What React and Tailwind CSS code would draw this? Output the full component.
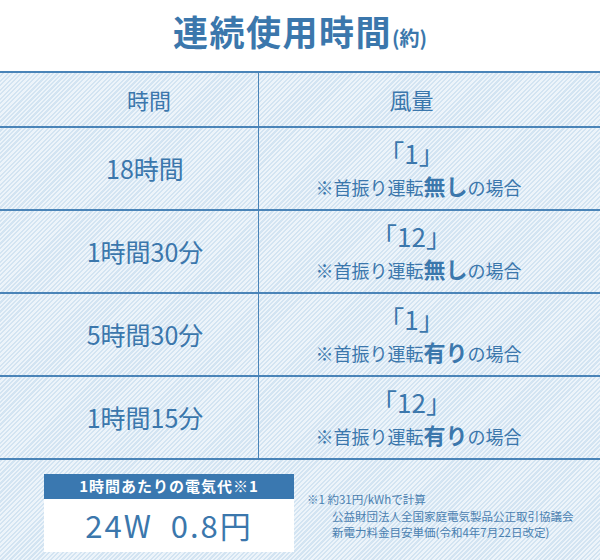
const rows = [
  { time: "18時間", speed: "1", swing: "無し" },
  { time: "1時間30分", speed: "12", swing: "無し" },
  { time: "5時間30分", speed: "1", swing: "有り" },
  { time: "1時間15分", speed: "12", swing: "有り" },
];

const font = "font-['Noto_Sans_CJK_JP','Noto_Sans',sans-serif]";

export default function App() {
  return (
    <div className={`flex h-[560px] w-[600px] flex-col bg-white text-[#3b77ac] ${font}`}>
      <div className="flex h-[71px] shrink-0 items-center justify-center pb-[10px]">
        <h1 className="text-[35px] font-bold leading-none tracking-[1.5px]">
          連続使用時間<span className="text-[20px] font-bold tracking-normal">(約)</span>
        </h1>
      </div>

      <div className="flex-1 bg-[repeating-linear-gradient(135deg,#d3e4f2_0px,#d3e4f2_1.6px,#edf4fa_1.6px,#edf4fa_3.2px)]">
        <div className="grid grid-cols-[259px_1fr] border-t-2 border-[#4a84b8]">
          <div className="flex h-[55px] items-center justify-center border-r border-b-2 border-[#4a84b8] pl-[40px] text-[22px]">
            時間
          </div>
          <div className="flex h-[55px] items-center justify-center border-b-2 border-[#4a84b8] pr-[36px] text-[22px]">
            風量
          </div>
          {rows.map((r, i) => (
            <div key={i} className="contents">
              <div className="flex h-[83px] items-center justify-center border-r border-b-2 border-[#4a84b8] pl-[32px] text-[25px]">
                {r.time}
              </div>
              <div className="flex h-[83px] flex-col items-center justify-center gap-[8px] border-b-2 border-[#4a84b8] pr-[22px]">
                <div className="pr-[14px] text-[26px] leading-[26px]">「{r.speed}」</div>
                <div className="text-[18px] leading-[22px]">
                  ※首振り運転<span className="text-[22px] font-bold">{r.swing}</span>の場合
                </div>
              </div>
            </div>
          ))}
        </div>

        <div className="flex">
          <div className="ml-[44px] mt-[14px] w-[250px]">
            <div className="flex h-[25px] items-center justify-center bg-[#3a78b0] text-[15px] font-bold tracking-[1px] text-white">
              1時間あたりの電気代※1
            </div>
            <div className="flex h-[53px] items-center justify-center bg-white text-[31px] tracking-[2px]">
              24W&nbsp;&nbsp;0.8円
            </div>
          </div>
          <div className="ml-[13px] mt-[31px] text-[11.5px] leading-[16.5px] text-[#4a80b0]">
            <div>※1 約31円/kWhで計算</div>
            <div className="pl-[25px]">公益財団法人全国家庭電気製品公正取引協議会</div>
            <div className="pl-[25px]">新電力料金目安単価(令和4年7月22日改定)</div>
          </div>
        </div>
      </div>
    </div>
  );
}
